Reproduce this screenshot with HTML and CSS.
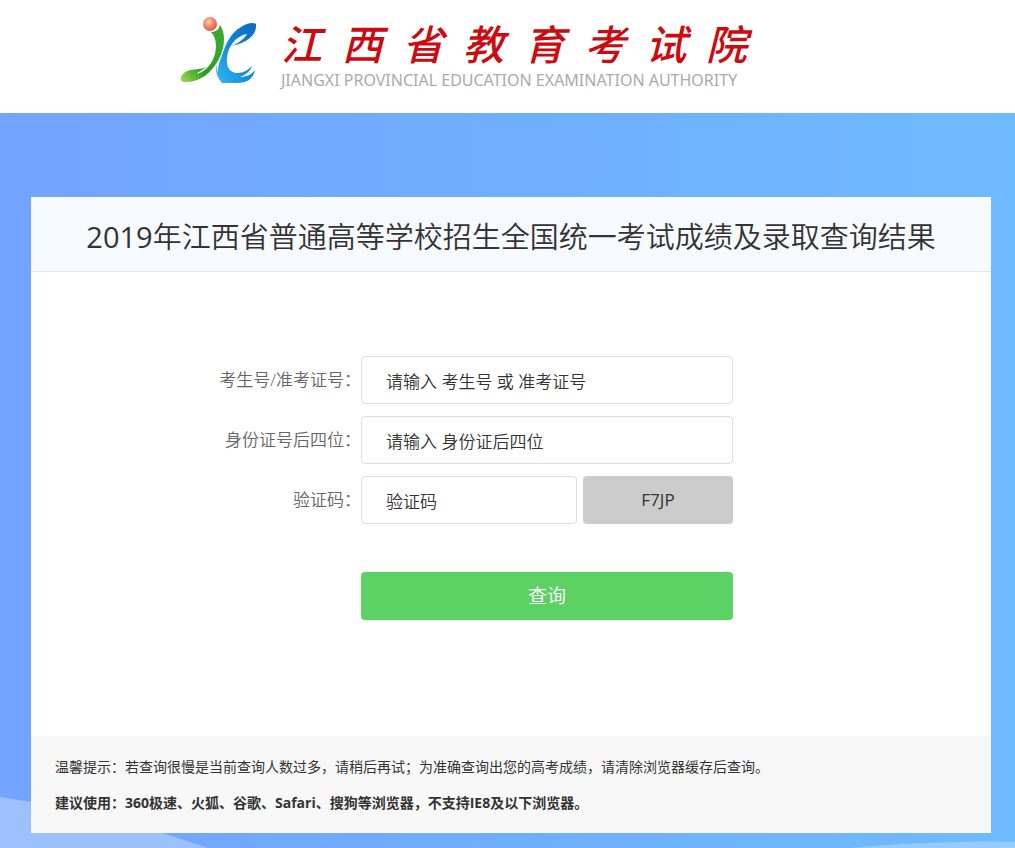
FILE: index.html
```html
<!DOCTYPE html>
<html lang="zh-CN">
<head>
    <meta charset="UTF-8">
    <meta name="viewport" content="width=device-width, initial-scale=1.0">
    <title>江西省教育考试院</title>
    <link rel="stylesheet" href="styles.css">
</head>
<body>
    <header class="site-header">
        <svg class="logo" viewBox="0 0 80 70" aria-hidden="true">
            <defs>
                <linearGradient id="green" x1="1" y1="0" x2="0" y2="1">
                    <stop offset="0" stop-color="#3fae35"/>
                    <stop offset=".65" stop-color="#299c25"/>
                    <stop offset="1" stop-color="#a5dc55"/>
                </linearGradient>
                <linearGradient id="blue" x1="1" y1="0" x2="0" y2="1">
                    <stop offset="0" stop-color="#1268bd"/>
                    <stop offset=".45" stop-color="#0b84d8"/>
                    <stop offset="1" stop-color="#35b5ee"/>
                </linearGradient>
                <radialGradient id="ball" cx=".4" cy=".35" r=".65">
                    <stop offset="0" stop-color="#ffd0b8"/>
                    <stop offset=".5" stop-color="#f28c6c"/>
                    <stop offset="1" stop-color="#d9583f"/>
                </radialGradient>
            </defs>
            <path fill="url(#green)" d="M41 9C47 17 46 32 40 43C32 58 20 67 4 66C-1 63 3 56 11 54C17 53 23 53 28 51C23 54 19 56 18 58C27 55 33 48 36 38C38 29 37 21 32 16C37 16 40 13 41 9Z"/>
            <path fill="url(#blue)" d="M77 8C78 19 69 26 53 30C61 26 66 22 68 18C57 20 49 30 48 42C47 52 52 57 58 57C65 57 69 54 73 50C71 56 66 59 61 61C67 61 72 59 76 54C74 63 68 67 58 67L43 67C37 61 38 52 42 42C46 30 51 17 62 11C68 7 74 6 77 8Z"/>
            <path fill="#35b5ee" d="M40 40C35 49 38 60 46 67C38 65 34 53 40 40Z"/>
            <circle cx="31" cy="8" r="7" fill="url(#ball)"/>
        </svg>
        <div class="brand">
            <div class="brand-name">
                <span>江</span><span>西</span><span>省</span><span>教</span><span>育</span><span>考</span><span>试</span><span>院</span>
            </div>
            <div class="brand-sub">JIANGXI PROVINCIAL EDUCATION EXAMINATION AUTHORITY</div>
        </div>
    </header>

    <main class="stage">
        <svg class="waves" viewBox="0 0 1015 60" preserveAspectRatio="none" aria-hidden="true">
            <path fill="#9dc0ff" d="M0 9C75 20 145 38 208 60H0Z"/>
            <path fill="#97cbff" d="M850 60C900 55 960 53 1015 54V60Z"/>
        </svg>
        <section class="card">
            <h1><span class="year">2019</span>年江西省普通高等学校招生全国统一考试成绩及录取查询结果</h1>
            <form class="query-form">
                <label for="examNo">考生号/准考证号：</label>
                <input type="text" id="examNo" name="examNo" placeholder="请输入 考生号 或 准考证号">

                <label for="idCard">身份证号后四位：</label>
                <input type="text" id="idCard" name="idCard" placeholder="请输入 身份证后四位">

                <label for="code">验证码：</label>
                <div class="code-row">
                    <input type="text" id="code" name="code" placeholder="验证码">
                    <button type="button" class="code-btn">F7JP</button>
                </div>

                <button type="submit" class="submit-btn">查询</button>
            </form>
            <footer class="tips">
                <p>温馨提示：若查询很慢是当前查询人数过多，请稍后再试；为准确查询出您的高考成绩，请清除浏览器缓存后查询。</p>
                <p><strong>建议使用：360极速、火狐、谷歌、Safari、搜狗等浏览器，不支持IE8及以下浏览器。</strong></p>
            </footer>
        </section>
    </main>
</body>
</html>
```

FILE: styles.css
```css
* {
    margin: 0;
    padding: 0;
    box-sizing: border-box;
}

body {
    display: flex;
    flex-direction: column;
    min-height: 100vh;
    background: #fff;
    color: #333;
    font-family: "Open Sans", "Noto Sans CJK SC", sans-serif;
    font-size: 14px;
}

/* 顶部 */
.site-header {
    display: flex;
    align-items: flex-start;
    gap: 22px;
    padding: 16px 24px 0 179px;
    height: 113px;
}

.logo {
    width: 80px;
    height: 70px;
    flex: none;
}

.brand {
    width: 466px;
}

.brand-name {
    display: flex;
    justify-content: space-between;
    color: #cc0a0f;
    font-size: 41px;
    font-style: italic;
    font-weight: 500;
    line-height: 56px;
}

.brand-sub {
    color: #aaa;
    font-family: "Noto Sans", sans-serif;
    font-size: 16px;
    line-height: 16px;
    white-space: nowrap;
}

/* 背景 */
.stage {
    position: relative;
    flex: 1;
    padding: 84px 24px 15px 31px;
    background: linear-gradient(to right, #73a4ff, #70aeff 50%, #6fbbff);
}

.waves {
    position: absolute;
    left: 0;
    bottom: 0;
    width: 100%;
    height: 60px;
}

.card {
    position: relative;
    max-width: 960px;
    margin: 0 auto;
    background: #fff;
}

.card h1 {
    padding: 6px 24px 0;
    border-bottom: 1px solid #e1e8f5;
    background: #f7faff;
    font-size: 29px;
    font-weight: 350;
    line-height: 68px;
    text-align: center;
}

.card .year {
    font-weight: 400;
}

/* 查询表单 */
.query-form {
    display: grid;
    grid-template-columns: 55fr minmax(0, 372px) 43fr;
    row-gap: 12px;
    padding: 84px 0 116px;
    font-size: 17px;
}

.query-form label {
    grid-column: 1;
    color: #666;
    font-weight: 350;
    line-height: 48px;
    text-align: right;
}

.query-form input {
    width: 100%;
    height: 48px;
    padding: 2px 24px 0;
    border: 1px solid #ddd;
    border-radius: 4px;
    background: #fff;
    color: #333;
    font: inherit;
    font-weight: 350;
}

.query-form input::placeholder {
    color: #333;
    opacity: 1;
}

.query-form button {
    height: 48px;
    padding-bottom: 2px;
    border: none;
    border-radius: 4px;
    font: inherit;
    cursor: pointer;
}

.code-row {
    display: flex;
    gap: 6px;
}

.query-form .code-btn {
    flex: 0 0 150px;
    background: #ccc;
    color: #333;
}

.query-form .submit-btn {
    grid-column: 2;
    margin-top: 36px;
    background: #5cd265;
    color: #fff;
    font-size: 19px;
    font-weight: 350;
}

/* 提示 */
.tips {
    padding: 13px 24px 12px;
    background: #f8f8f8;
    line-height: 36px;
}
```
